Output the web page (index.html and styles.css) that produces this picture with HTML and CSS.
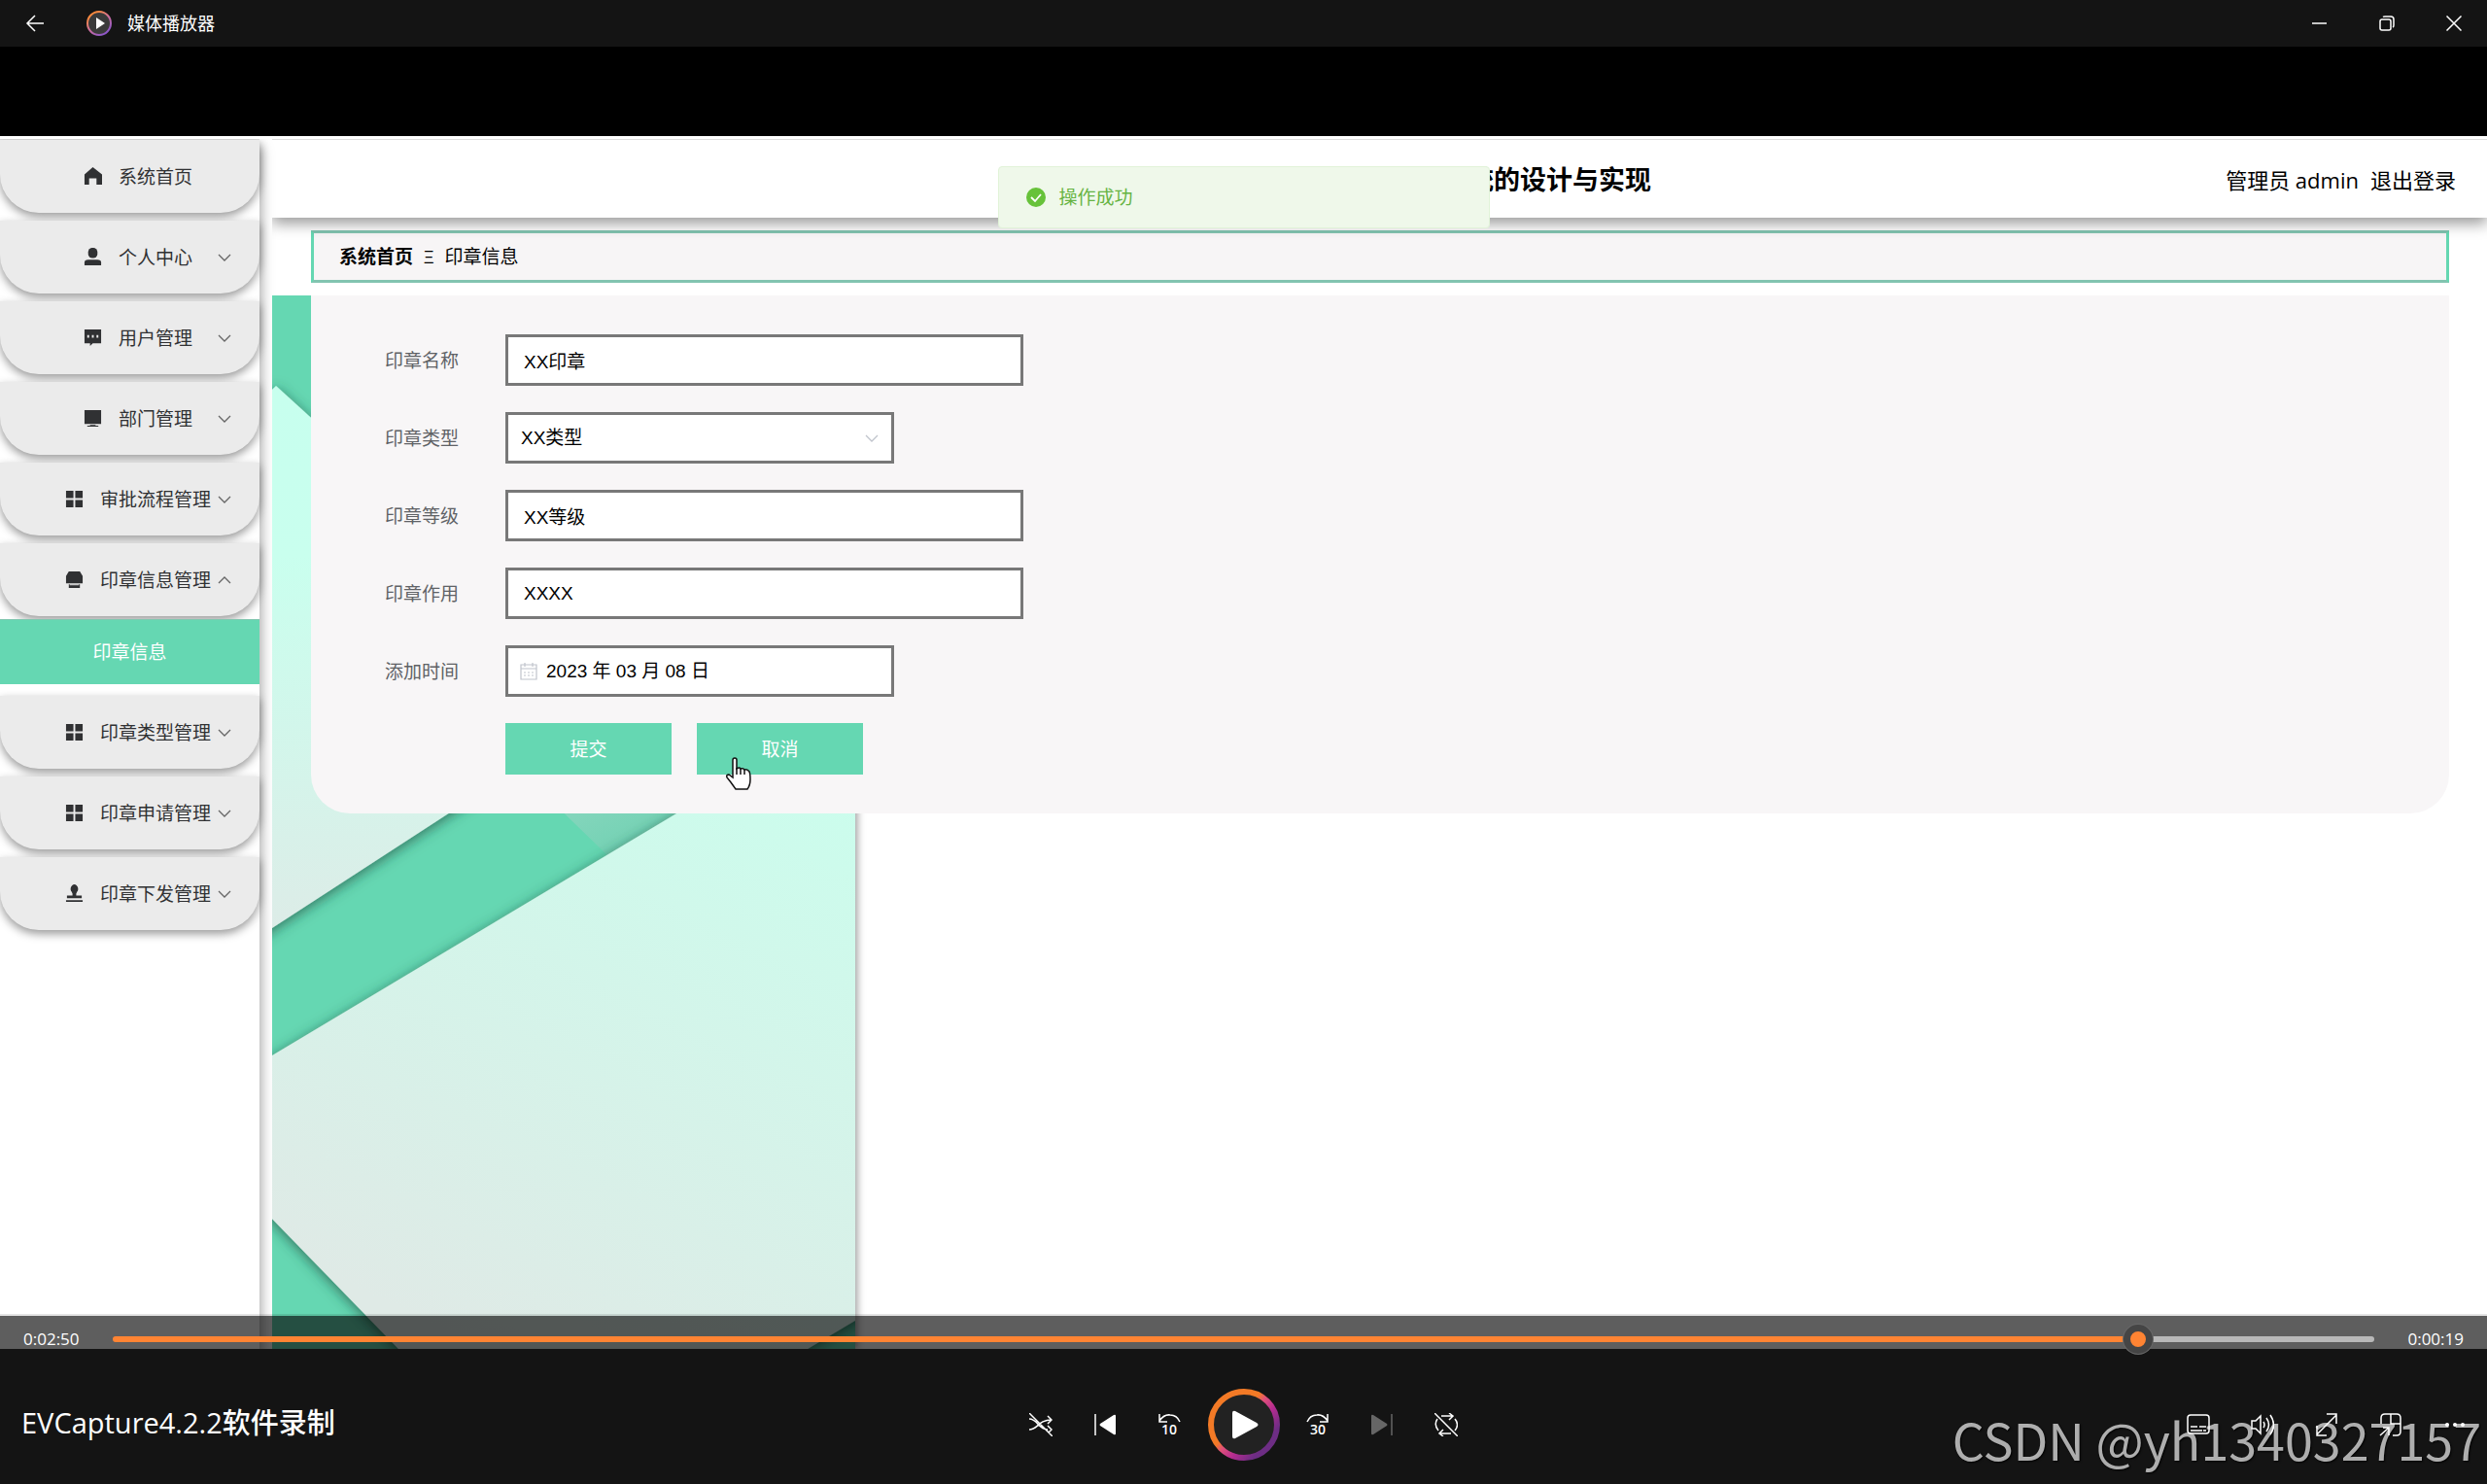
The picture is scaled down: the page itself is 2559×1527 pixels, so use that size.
FILE: index.html
```html
<!DOCTYPE html>
<html lang="zh-CN">
<head>
<meta charset="utf-8">
<title>媒体播放器</title>
<link rel="stylesheet" href="styles.css">
</head>
<body>
<svg class="defs" aria-hidden="true">
  <symbol id="i-grid" viewBox="0 0 20 20"><path d="M1 1h8v8H1zM11 1h8v8h-8zM1 11h8v8H1zM11 11h8v8h-8z"/></symbol>
  <symbol id="i-down" viewBox="0 0 14 14"><path d="M1 4l6 6 6-6" fill="none" stroke="currentColor" stroke-width="1.3"/></symbol>
  <symbol id="i-up" viewBox="0 0 14 14"><path d="M1 10l6-6 6 6" fill="none" stroke="currentColor" stroke-width="1.3"/></symbol>
</svg>

<header class="titlebar">
  <button class="back" aria-label="返回"><svg width="20" height="20" viewBox="0 0 20 20"><path d="M19 10H2M10 2l-8 8 8 8" class="line"/></svg></button>
  <svg class="logo" width="28" height="28" viewBox="0 0 28 28">
    <defs><linearGradient id="ring" x1="0" y1="0" x2=".7" y2="1"><stop offset=".2" stop-color="#f9893f"/><stop offset=".55" stop-color="#d0709a"/><stop offset="1" stop-color="#8a55c8"/></linearGradient></defs>
    <circle cx="14" cy="14" r="12" fill="#3a3a3a" stroke="url(#ring)" stroke-width="2"/>
    <path d="M11 8l9 6-9 6z" fill="#fff"/>
  </svg>
  <span class="app-name">媒体播放器</span>
  <div class="window-buttons">
    <button aria-label="最小化"><svg width="16" height="16" viewBox="0 0 16 16"><path d="M0 8h15" class="line"/></svg></button>
    <button aria-label="还原"><svg width="16" height="16" viewBox="0 0 16 16"><rect x="1" y="4" width="11" height="11" rx="2" class="line"/><path d="M4 1.5Q4.500 1 6 1h6q3 0 3 3v6q0 1.500-1 2" class="line"/></svg></button>
    <button aria-label="关闭"><svg width="16" height="16" viewBox="0 0 16 16"><path d="M.5.5l15 15M15.500.5l-15 15" class="line"/></svg></button>
  </div>
</header>

<main class="video">
  <div class="screen">
    <nav class="sidebar">
      <ul>
        <li><button class="item"><span class="label"><svg class="icon" viewBox="0 0 20 20"><path d="M10 0l10 8v11h-6v-7H6v7H1V8z"/></svg>系统首页</span></button></li>
        <li><button class="item"><span class="label"><svg class="icon" viewBox="0 0 20 20"><rect x="5" y="0" width="10" height="11" rx="4.500"/><path d="M1 19v-3q0-3 4-3h10q4 0 4 3v3z"/></svg>个人中心</span><svg class="arrow"><use href="#i-down"/></svg></button></li>
        <li><button class="item"><span class="label"><svg class="icon" viewBox="0 0 20 20"><path fill-rule="evenodd" d="M1 1h18v15h-9l-3 3v-3H1zM4 7v3h2V7zM9 7v3h2V7zM14 7v3h2V7z"/></svg>用户管理</span><svg class="arrow"><use href="#i-down"/></svg></button></li>
        <li><button class="item"><span class="label"><svg class="icon" viewBox="0 0 20 20"><path d="M1 1h18v15H1zM7 17h6v1h3v1H4v-1h3z"/></svg>部门管理</span><svg class="arrow"><use href="#i-down"/></svg></button></li>
        <li><button class="item"><span class="label"><svg class="icon"><use href="#i-grid"/></svg>审批流程管理</span><svg class="arrow"><use href="#i-down"/></svg></button></li>
        <li><button class="item" aria-expanded="true"><span class="label"><svg class="icon" viewBox="0 0 20 20"><path d="M4 1h12l3 5v8H1V6zM4 15h12v4H4z"/><path d="M5 15.500h10" stroke="#ebebeb"/></svg>印章信息管理</span><svg class="arrow"><use href="#i-up"/></svg></button>
          <a class="subitem" href="#">印章信息</a></li>
        <li><button class="item"><span class="label"><svg class="icon"><use href="#i-grid"/></svg>印章类型管理</span><svg class="arrow"><use href="#i-down"/></svg></button></li>
        <li><button class="item"><span class="label"><svg class="icon"><use href="#i-grid"/></svg>印章申请管理</span><svg class="arrow"><use href="#i-down"/></svg></button></li>
        <li><button class="item"><span class="label"><svg class="icon" viewBox="0 0 20 20"><path d="M10 0a5 5 0 0 1 3 8l-1 2v2h6v3H2v-3h6v-2L7 8a5 5 0 0 1 3-8zM1 17h18v2H1z"/></svg>印章下发管理</span><svg class="arrow"><use href="#i-down"/></svg></button></li>
      </ul>
    </nav>
    <section class="content">
      <header class="page-header">
        <h1>统的设计与实现</h1>
        <div class="account"><span>管理员 admin</span><a href="#">退出登录</a></div>
      </header>
      <div class="breadcrumb"><a href="#">系统首页</a><span>Ξ</span><span>印章信息</span></div>
      <div class="workspace">
        <svg class="art" viewBox="0 0 600 1084" preserveAspectRatio="xMinYMin slice" aria-hidden="true">
          <defs>
            <linearGradient id="m1" x1="0" y1="0" x2="0" y2="1"><stop offset="0" stop-color="#c7ffee"/><stop offset=".3" stop-color="#c9ffee"/><stop offset="1" stop-color="#deebe7"/></linearGradient>
            <linearGradient id="m2" gradientUnits="userSpaceOnUse" x1="560" y1="460" x2="250" y2="1100"><stop offset="0" stop-color="#cafeed"/><stop offset="1" stop-color="#dfeae6"/></linearGradient>
            <linearGradient id="m3" x1="0" y1="0" x2="1" y2="1"><stop offset="0" stop-color="#99dac6"/><stop offset="1" stop-color="#67cfae"/></linearGradient>
            <filter id="sh" x="-10%" y="-10%" width="120%" height="120%"><feDropShadow dx="0" dy="3" stdDeviation="7" flood-color="#1c4a3b" flood-opacity=".7"/></filter>
          </defs>
          <rect width="600" height="1084" fill="#65d7b2"/>
          <path d="M244 478l103 100 100-64V478z" fill="url(#m3)"/>
          <path d="M-40 136L4 93l356 324L-40 677z" fill="url(#m1)" filter="url(#sh)"/>
          <path d="M-40 806L640 399v632l-89 53-100 60H188l-58-60L-40 909z" fill="url(#m2)" filter="url(#sh)"/>
        </svg>
        <form class="panel">
          <div class="row"><label for="name">印章名称</label><input id="name" class="field wide" type="text" value="XX印章"></div>
          <div class="row"><label for="type">印章类型</label>
            <div class="select-box field"><select id="type"><option>XX类型</option></select><svg width="14" height="14"><use href="#i-down"/></svg></div></div>
          <div class="row"><label for="level">印章等级</label><input id="level" class="field wide" type="text" value="XX等级"></div>
          <div class="row"><label for="use">印章作用</label><input id="use" class="field wide" type="text" value="XXXX"></div>
          <div class="row"><label for="date">添加时间</label>
            <div class="date-box field"><svg width="18" height="18" viewBox="0 0 18 18" fill="none" stroke="#c0c4cc" stroke-width="1.200"><path d="M1 2h16v15H1zM1 6h16M5 0v4M13 0v4M4 10h2M8 10h2M12 10h2M4 13h2M8 13h2M12 13h2"/></svg><input id="date" type="text" value="2023 年 03 月 08 日"></div></div>
          <div class="row actions"><button type="button">提交</button><button type="button">取消
            <svg class="cursor" width="26" height="34" viewBox="0 0 26 34"><path d="M7 3q0-2 2-2t2 2v9q3-2 4 0 3-1 4 1 3-1 5 2 1 2 1 8 0 6-3 10H10l-5-7-4-5q-1-3 2-3l4 3z" fill="#fff" stroke="#111" stroke-width="1.500"/><path d="M11 11v7M15 12v6M19 13v5" stroke="#111" stroke-width="1.500"/></svg></button></div>
        </form>
      </div>
    </section>
  </div>
  <div class="toast" role="status"><svg width="20" height="20" viewBox="0 0 20 20"><circle cx="10" cy="10" r="10" fill="#67c23a"/><path d="M5 10l4 4 6-7" fill="none" stroke="#fff" stroke-width="1.800"/></svg>操作成功</div>
  <div class="seek"><span>0:02:50</span><input type="range" min="0" max="1890" value="1702" aria-label="播放进度"><span>0:00:19</span></div>
</main>

<footer class="controls">
  <h2>EVCapture4.2.2软件录制</h2>
  <div class="transport">
    <button aria-label="随机播放"><svg width="24" height="24" viewBox="0 0 24 24" class="line"><path d="M0 6c9 0 9 11 19 11M0 17c9 0 9-10 23-10M19 3l4 4-4 4M19 13l4 4-3 3M0 0l24 24"/></svg></button>
    <button aria-label="上一个"><svg width="24" height="24" viewBox="0 0 24 24"><path d="M2 1v22" class="line"/><path d="M7 11L21 2q2-1 2 1v18q0 2-2 1L7 13q-1-1 0-2z" fill="#fff"/></svg></button>
    <button aria-label="后退 10 秒"><svg width="24" height="10" viewBox="0 0 24 10" class="line"><path d="M2 1v8h8M2 8Q7 1 13 2q7 0 10 7"/></svg><span>10</span></button>
    <button class="play" aria-label="播放"><svg width="76" height="76" viewBox="0 0 76 76">
      <defs><linearGradient id="pr" x1=".2" y1=".2" x2=".85" y2=".75"><stop offset=".35" stop-color="#f37a26"/><stop offset=".48" stop-color="#e0507a"/><stop offset=".7" stop-color="#b52c90"/><stop offset="1" stop-color="#6d2d84"/></linearGradient></defs>
      <circle cx="38" cy="38" r="34" fill="#222" stroke="url(#pr)" stroke-width="6"/><path d="M26 26q0-3 3-2l22 12q3 2 0 4L29 52q-3 1-3-2z" fill="#fff"/></svg></button>
    <button aria-label="前进 30 秒"><svg width="24" height="10" viewBox="0 0 24 10" class="line"><path d="M22 1v8h-8M22 8Q17 1 11 2 4 2 1 9"/></svg><span>30</span></button>
    <button aria-label="下一个" disabled><svg width="24" height="24" viewBox="0 0 24 24"><path d="M22 1v22" stroke="#666" stroke-width="1.500"/><path d="M17 11L3 2Q1 1 1 3v18q0 2 2 1l14-9q1-1 0-2z" fill="#666"/></svg></button>
    <button aria-label="循环"><svg width="24" height="24" viewBox="0 0 24 24" class="line"><path d="M7 3h12M15 0l4 3-4 4M17 21H5M9 17l-4 4 4 3M3 6q-4 6 1 12M21 6q5 6 0 12M0 0l24 24"/></svg></button>
  </div>
  <div class="tools">
    <button aria-label="字幕"><svg width="24" height="24" viewBox="0 0 24 24" class="line"><rect x="1" y="2" width="22" height="19" rx="3"/><path d="M4 14h7M13 14h7M4 18h12M17 18h3"/></svg></button>
    <button aria-label="音量"><svg width="24" height="24" viewBox="0 0 24 24" class="line"><path d="M1 8h4l5-5v18l-5-5H1zM13 9q2 3 0 6M16 5q5 7 0 14M20 2q7 10 0 20"/></svg></button>
    <button aria-label="全屏"><svg width="24" height="24" viewBox="0 0 24 24" class="line"><path d="M2 22L22 2M12 1h10v10M2 13v10h10"/></svg></button>
    <button aria-label="小窗"><svg width="24" height="24" viewBox="0 0 24 24" class="line"><path d="M2 11V5q0-4 4-4h12q4 0 4 4v14q0 4-4 4h-4M12 1v10h10M1 23l9-8M4 15h6v8"/></svg></button>
    <button aria-label="更多"><svg width="24" height="24" viewBox="0 0 24 24" fill="#fff"><circle cx="4" cy="12" r="2"/><circle cx="12" cy="12" r="2"/><circle cx="20" cy="12" r="2"/></svg></button>
  </div>
  <span class="watermark">CSDN @yh1340327157</span>
</footer>
</body>
</html>
```
FILE: styles.css
```css
* { box-sizing: border-box; }
body {
  margin: 0;
  min-height: 100vh;
  display: flex;
  flex-direction: column;
  background: #000;
  color: #000;
  font: 19px/28px "Open Sans", "Noto Sans CJK SC", sans-serif;
}
button, input, select { font: inherit; color: inherit; border: 0; padding: 0; margin: 0; background: none; border-radius: 0; outline: 0; }
a { color: inherit; text-decoration: none; }
ul { list-style: none; margin: 0; padding: 0; }
h1, h2 { margin: 0; }
.defs { position: absolute; width: 0; height: 0; }
.line { fill: none; stroke: #fff; stroke-width: 1.5; }

/* window title bar */
.titlebar { display: flex; align-items: center; height: 48px; background: #141414; color: #fff; }
.back { display: flex; justify-content: center; width: 72px; }
.logo { margin-left: 16px; }
.app-name { margin-left: 15px; font-size: 18px; }
.window-buttons { margin-left: auto; display: flex; }
.window-buttons button { width: 69px; height: 48px; display: grid; place-items: center; }

/* video area */
.video { position: relative; flex: 1; display: flex; padding-top: 92px; }
.screen {
  flex: 1;
  display: flex;
  gap: 13px;
  background: #fff;
  border-top: 3px solid #fff;
  overflow: hidden;
}

.sidebar { width: 267px; border-top: 1px solid #ddd; box-shadow: 2px 8px 12px rgba(0, 0, 0, .35); }
.sidebar li + li { margin-top: 8px; }
.item {
  display: flex;
  align-items: center;
  width: 100%;
  height: 75px;
  padding: 0 29px 0 60px;
  background: #ebebeb;
  border-radius: 0 0 40px 40px;
  box-shadow: 0 4px 10px rgba(0, 0, 0, .4);
  color: #303133;
}
.label { flex: 1; display: flex; justify-content: center; align-items: center; gap: 17px; margin-right: -4px; white-space: nowrap; }
.icon { width: 19px; height: 19px; fill: #303133; }
.arrow { width: 14px; height: 14px; margin-left: 4px; flex: none; color: #666; }
.item:not(:has(.arrow)) { padding-right: 47px; }
.subitem { display: block; margin-top: 3px; margin-bottom: 12px; line-height: 66px; text-align: center; background: #65d7b2; color: #fff; border-top: 1px solid #82c7b0; position: relative; }
.sidebar li:has(.subitem) + li { margin-top: 0; }

.content { flex: 1; display: flex; flex-direction: column; border-top: 1px solid #ddd; }
.page-header {
  display: grid;
  grid-template-columns: 1fr auto 1fr;
  align-items: center;
  height: 80px;
  padding: 2px 32px 0 0;
  box-shadow: 0 6px 14px rgba(0, 0, 0, .4);
  clip-path: inset(0 0 -24px 0);
}
.page-header h1 { grid-column: 2; font-size: 27px; line-height: 40px; padding-left: 402px; }
.account { display: flex; justify-content: flex-end; gap: 12px; font-size: 22px; }
.breadcrumb {
  display: flex;
  align-items: center;
  gap: 11px;
  height: 54px;
  margin: 13px 39px 13px 40px;
  padding-left: 26px;
  background: #f7f5f6;
  border: 3px solid #65d7b2;
  border-color: #82c4b0 #65d7b2;
}
.breadcrumb a { font-weight: 700; }
.workspace { position: relative; flex: 1; padding: 0 39px 0 40px; }
.art { position: absolute; left: 0; top: 0; width: 600px; height: 100%; box-shadow: 2px 0 8px rgba(0, 0, 0, .4); clip-path: inset(0 -16px 0 0); }
.panel {
  position: relative;
  display: flex;
  flex-direction: column;
  gap: 27px;
  padding: 40px 0;
  background: #f8f6f7;
  border-radius: 0 0 40px 40px;
}
.row { display: flex; align-items: center; gap: 48px; height: 53px; }
.row label { width: 152px; text-align: right; color: #606266; }
.field { width: 400px; height: 53px; background: #fff; border: 3px solid #787878; font: 19px/28px "Liberation Sans", "Noto Sans CJK SC", sans-serif; }
.wide { width: 533px; padding: 0 16px; }
.select-box, .date-box { display: flex; align-items: center; padding: 0 13px; }
.select-box { color: #000; }
.select-box select { flex: 1; appearance: none; }
.select-box svg { color: #c0c4cc; }
.date-box { gap: 9px; padding-left: 12px; }
.date-box input { flex: 1; }
.actions { gap: 26px; padding-left: 200px; }
.actions button { position: relative; width: 171px; height: 53px; background: #65d7b2; color: #fff; }
.cursor { position: absolute; left: 30px; top: 35px; }

.toast {
  position: absolute;
  left: 50%;
  top: 123px;
  width: 506px;
  height: 64px;
  margin-left: -253px;
  padding: 0 28px;
  display: flex;
  align-items: center;
  gap: 14px;
  background: #eff8ea;
  border: 1px solid #e1f3d8;
  border-radius: 4px;
  color: #67b444;
}

/* playback position */
.seek {
  position: absolute;
  left: 0;
  right: 0;
  bottom: 0;
  height: 36px;
  padding: 14px 24px 0;
  display: flex;
  align-items: center;
  gap: 34px;
  background: rgba(0, 0, 0, .63);
  background-clip: padding-box;
  border-top: 2px solid rgba(0, 0, 0, .1);
  color: #fff;
  font-size: 17px;
  line-height: 20px;
  z-index: 2;
}
.seek input { flex: 1; appearance: none; height: 6px; border-radius: 3px; background: linear-gradient(90deg, #ff8433 90%, #b8b8b8 90%); }
.seek input::-webkit-slider-thumb { appearance: none; width: 30px; height: 30px; border-radius: 50%; border: 7px solid #454545; background: #ff8433; box-shadow: 0 0 0 1px #686868; }

.controls {
  position: relative;
  display: grid;
  grid-template-columns: 1fr auto 1fr;
  align-items: center;
  height: 139px;
  padding-top: 16px;
  background: #141414;
  color: #fff;
}
.controls h2 { padding: 0 0 4px 22px; font-size: 29px; font-weight: 500; line-height: 40px; }
.transport, .tools { display: flex; align-items: center; }
.tools { justify-content: flex-end; position: relative; z-index: 1; }
.controls button { width: 66px; height: 66px; display: flex; flex-direction: column; align-items: center; justify-content: center; }
.controls .play { width: 87px; height: 76px; }
.controls button span { font-size: 14px; line-height: 14px; font-weight: 600; }
.watermark {
  position: absolute;
  right: 6px;
  bottom: 10px;
  font: 52px/72px "Noto Sans CJK SC", sans-serif;
  color: rgba(255, 255, 255, .68);
  text-shadow: 1px 1px 2px #000;
  pointer-events: none;
}
```
